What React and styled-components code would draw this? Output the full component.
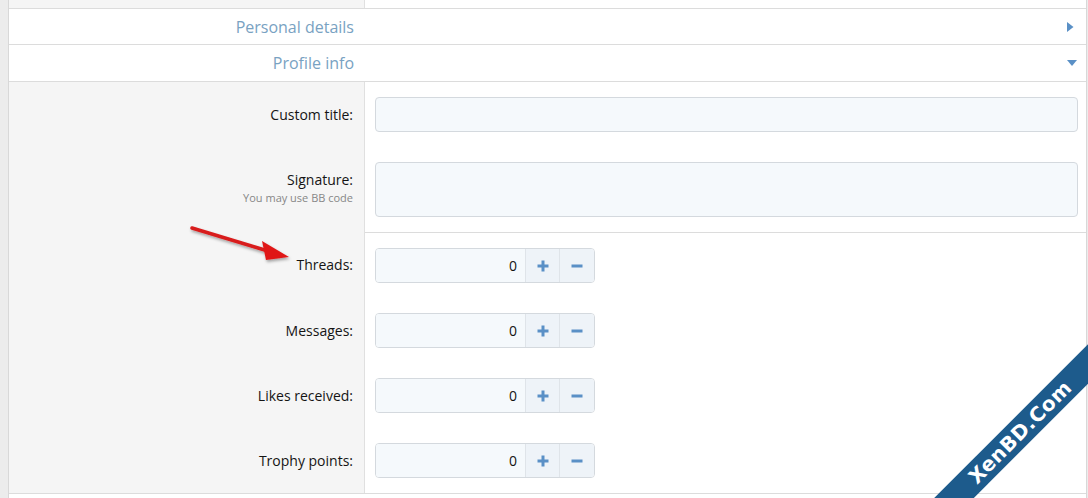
import React from 'react';
import styled, {createGlobalStyle} from 'styled-components';

const GlobalStyle = createGlobalStyle`
  html, body {
    margin: 0;
    padding: 0;
    background: #ffffff;
  }
  body {
    width: 1088px;
    height: 498px;
    overflow: hidden;
    position: relative;
    font-family: "Open Sans", "Noto Sans", sans-serif;
    color: #141414;
  }
`;

const LABEL_WIDTH = '356px';

const Page = styled.div`
  position: relative;
  width: 1088px;
  height: 498px;
  overflow: hidden;
  box-sizing: border-box;
  padding: 0 1px 0 8px;
  background: #ececec;
`;

const Panel = styled.div`
  height: 100%;
  background: #ffffff;
  border-left: 1px solid #d8d8d8;
  border-right: 1px solid #d8d8d8;
  display: flex;
  flex-direction: column;
`;

const Stub = styled.div`
  display: grid;
  grid-template-columns: ${LABEL_WIDTH} 1fr;
  height: 8px;
  border-bottom: 1px solid #dcdcdc;
`;

const GrayCell = styled.div`
  background: #f5f5f5;
  border-right: 1px solid #e0e0e0;
`;

const CollapseHeader = styled.div`
  display: grid;
  grid-template-columns: ${LABEL_WIDTH} 1fr;
  align-items: center;
  height: ${({$height}) => $height}px;
  border-bottom: 1px solid #dcdcdc;
  background: #ffffff;
`;

const HeaderTitle = styled.span`
  text-align: right;
  padding-right: 11px;
  font-size: 16px;
  color: #79a2c2;
`;

const HeaderToggle = styled.span`
  display: flex;
  justify-content: flex-end;
  padding-right: ${({$open}) => ($open ? 9 : 12)}px;
`;

const FormBody = styled.div`
  display: flex;
  flex-direction: column;
  border-bottom: 1px solid #dcdcdc;
`;

const FormRow = styled.div`
  display: grid;
  grid-template-columns: ${LABEL_WIDTH} 1fr;
`;

const LabelCell = styled.div`
  background: #f5f5f5;
  border-right: 1px solid #e0e0e0;
  padding: 15px 11px 15px 0;
  text-align: right;
  display: flex;
  flex-direction: column;
  align-items: flex-end;
`;

const Label = styled.span`
  font-size: 14px;
  line-height: 35px;
  height: 35px;
`;

const Hint = styled.span`
  font-size: 11px;
  line-height: 12px;
  color: #878787;
  margin-top: -5px;
`;

const ControlCell = styled.div`
  padding: 15px 8px 15px 10px;
  background: #ffffff;
  border-top: ${({$separated}) => ($separated ? '1px solid #dcdcdc' : 'none')};
`;

const TextInput = styled.div`
  height: 35px;
  box-sizing: border-box;
  border: 1px solid #d4d9de;
  border-radius: 4px;
  background: #f5f9fc;
`;

const TextArea = styled(TextInput)`
  height: 55px;
`;

const NumberBox = styled.div`
  display: inline-flex;
  height: 35px;
  box-sizing: border-box;
  border: 1px solid #d4d9de;
  border-radius: 4px;
  overflow: hidden;
`;

const NumberField = styled.div`
  width: 149px;
  background: #f5f9fc;
  text-align: right;
  padding-right: 8px;
  box-sizing: border-box;
  font-size: 14px;
  line-height: 33px;
`;

const StepButton = styled.div`
  width: ${({$wide}) => ($wide ? 35 : 34)}px;
  box-sizing: border-box;
  background: #eef3f8;
  border-left: 1px solid #dfe4e9;
  display: flex;
  align-items: center;
  justify-content: center;
`;

const Annotation = styled.svg`
  position: absolute;
  left: 0;
  top: 0;
  pointer-events: none;
`;

const Ribbon = styled.div`
  position: absolute;
  left: 870px;
  top: 418px;
  width: 300px;
  height: 28px;
  background: #1d5b8c;
  transform: rotate(-45deg);
  display: flex;
  align-items: center;
  justify-content: center;
  color: #ffffff;
  font-family: "DejaVu Sans", Verdana, sans-serif;
  font-weight: bold;
  font-size: 20px;
  letter-spacing: 0.5px;
`;

const BLUE = '#5a90c6';

const CaretRight = () => (
  <svg width="7" height="10" viewBox="0 0 7 10">
    <path d="M0 0 L6.5 5 L0 10 Z" fill={BLUE} />
  </svg>
);

const CaretDown = () => (
  <svg width="10" height="6" viewBox="0 0 10 6">
    <path d="M0 0 L10 0 L5 6 Z" fill={BLUE} />
  </svg>
);

const Plus = () => (
  <svg width="12" height="12" viewBox="0 0 12 12">
    <path d="M6 0.5 V11.5 M0.5 6 H11.5" stroke={BLUE} strokeWidth="3" />
  </svg>
);

const Minus = () => (
  <svg width="12" height="12" viewBox="0 0 12 12">
    <path d="M0.5 6 H11.5" stroke={BLUE} strokeWidth="3" />
  </svg>
);

const counters = [
  {label: 'Threads:', value: 0},
  {label: 'Messages:', value: 0},
  {label: 'Likes received:', value: 0},
  {label: 'Trophy points:', value: 0},
];

export default function App() {
  return (
    <>
      <GlobalStyle />
      <Page>
        <Panel>
          <Stub>
            <GrayCell />
            <div />
          </Stub>
          <CollapseHeader $height={35}>
            <HeaderTitle>Personal details</HeaderTitle>
            <HeaderToggle>
              <CaretRight />
            </HeaderToggle>
          </CollapseHeader>
          <CollapseHeader $height={36}>
            <HeaderTitle>Profile info</HeaderTitle>
            <HeaderToggle $open>
              <CaretDown />
            </HeaderToggle>
          </CollapseHeader>
          <FormBody>
            <FormRow>
              <LabelCell>
                <Label>Custom title:</Label>
              </LabelCell>
              <ControlCell>
                <TextInput />
              </ControlCell>
            </FormRow>
            <FormRow>
              <LabelCell>
                <Label>Signature:</Label>
                <Hint>You may use BB code</Hint>
              </LabelCell>
              <ControlCell>
                <TextArea />
              </ControlCell>
            </FormRow>
            {counters.map((c, i) => (
              <FormRow key={c.label}>
                <LabelCell>
                  <Label>{c.label}</Label>
                </LabelCell>
                <ControlCell $separated={i === 0}>
                  <NumberBox>
                    <NumberField>{c.value}</NumberField>
                    <StepButton>
                      <Plus />
                    </StepButton>
                    <StepButton $wide>
                      <Minus />
                    </StepButton>
                  </NumberBox>
                </ControlCell>
              </FormRow>
            ))}
          </FormBody>
        </Panel>

        <Annotation width="1088" height="498">
          <defs>
            <filter id="shadow" x="-20%" y="-50%" width="140%" height="200%">
              <feDropShadow dx="1" dy="2" stdDeviation="1.5" floodColor="#000" floodOpacity="0.35" />
            </filter>
          </defs>
          <g filter="url(#shadow)">
            <line x1="192" y1="228" x2="268" y2="251" stroke="#d81b1b" strokeWidth="3.5" strokeLinecap="round" />
            <polygon points="289,257 262,241 266,260" fill="#e01818" />
          </g>
        </Annotation>

        <Ribbon>XenBD.Com</Ribbon>
      </Page>
    </>
  );
}
